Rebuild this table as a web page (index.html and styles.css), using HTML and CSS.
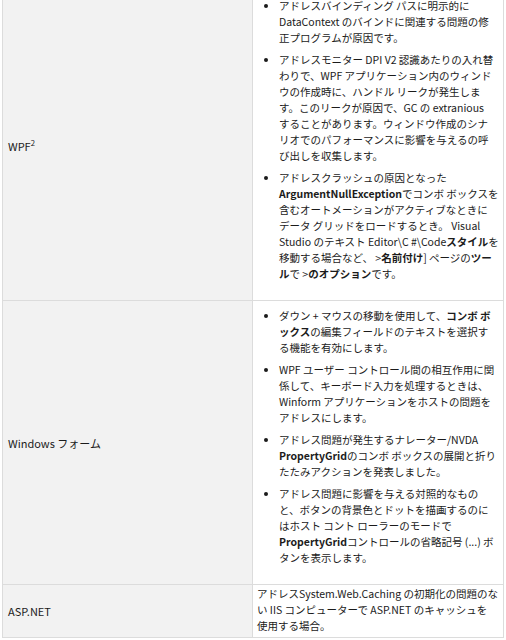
FILE: index.html
```html
<!DOCTYPE html>
<html lang="ja">
<head>
    <meta charset="UTF-8">
    <meta name="viewport" content="width=device-width, initial-scale=1.0">
    <title>修正された問題</title>
    <link rel="stylesheet" href="styles.css">
</head>
<body>

    <table class="fix-table">
        <tr>
            <td class="area">WPF<sup>2</sup></td>
            <td class="detail">
                <ul>
                    <li>アドレスバインディング パスに明示的に<br>DataContext のバインドに関連する問題の修<br>正プログラムが原因です。</li>
                    <li>アドレスモニター DPI V2 認識あたりの入れ替<br>わりで、WPF アプリケーション内のウィンド<br>ウの作成時に、ハンドル リークが発生しま<br>す。このリークが原因で、GC の extranious<br>することがあります。ウィンドウ作成のシナ<br>リオでのパフォーマンスに影響を与えるの呼<br>び出しを収集します。</li>
                    <li>アドレスクラッシュの原因となった<br><b>ArgumentNullException</b>でコンボ ボックスを<br>含むオートメーションがアクティブなときに<br>データ グリッドをロードするとき。 Visual<br>Studio のテキスト Editor\C #\Code<b>スタイル</b>を<br>移動する場合など、 &gt;<b>名前付け</b>] ページの<b>ツー<br>ル</b>で &gt;<b>のオプション</b>です。</li>
                </ul>
            </td>
        </tr>
        <tr>
            <td class="area">Windows フォーム</td>
            <td class="detail">
                <ul>
                    <li>ダウン + マウスの移動を使用して、<b>コンボ ボ<br>ックス</b>の編集フィールドのテキストを選択す<br>る機能を有効にします。</li>
                    <li>WPF ユーザー コントロール間の相互作用に関<br>係して、キーボード入力を処理するときは、<br>Winform アプリケーションをホストの問題を<br>アドレスにします。</li>
                    <li>アドレス問題が発生するナレーター/NVDA<br><b>PropertyGrid</b>のコンボ ボックスの展開と折り<br>たたみアクションを発表しました。</li>
                    <li>アドレス問題に影響を与える対照的なもの<br>と、ボタンの背景色とドットを描画するのに<br>はホスト コント ローラーのモードで<br><b>PropertyGrid</b>コントロールの省略記号 (...) ボ<br>タンを表示します。</li>
                </ul>
            </td>
        </tr>
        <tr>
            <td class="area">ASP.NET</td>
            <td class="detail plain">アドレスSystem.Web.Caching の初期化の問題のな<br>い IIS コンピューターで ASP.NET のキャッシュを<br>使用する場合。</td>
        </tr>
    </table>

</body>
</html>
```

FILE: styles.css
```css
:root {
    --text-color: #1b1b1b;
    --area-bg: #f2f2f2;
    --line-color: #dcdcdc;
}

body {
    font-family: "Noto Sans CJK JP", sans-serif;
    font-size: 10.5px;
    line-height: 16px;
    color: var(--text-color);
    background-color: #ffffff;
    margin: 0;
}

.fix-table {
    width: 502px;
    margin: -10px 0 0 2px;
    border-collapse: collapse;
    table-layout: fixed;
}

.fix-table td {
    border: 1px solid var(--line-color);
    vertical-align: middle;
}

.area {
    width: 239px;
    padding: 2px 5px;
    font-size: 11px;
    background-color: var(--area-bg);
}

.area sup {
    font-size: 0.7em;
    line-height: 0;
}

.detail {
    padding: 2px 3px 2px 4px;
    background-color: #ffffff;
    white-space: nowrap;
}

.detail.plain {
    padding: 1px 3px 3px 4px;
}

.detail ul {
    margin: 5px 0 16px;
    padding-left: 22px;
}

.detail li + li {
    margin-top: 6px;
}

.detail b {
    font-weight: bold;
}
```
